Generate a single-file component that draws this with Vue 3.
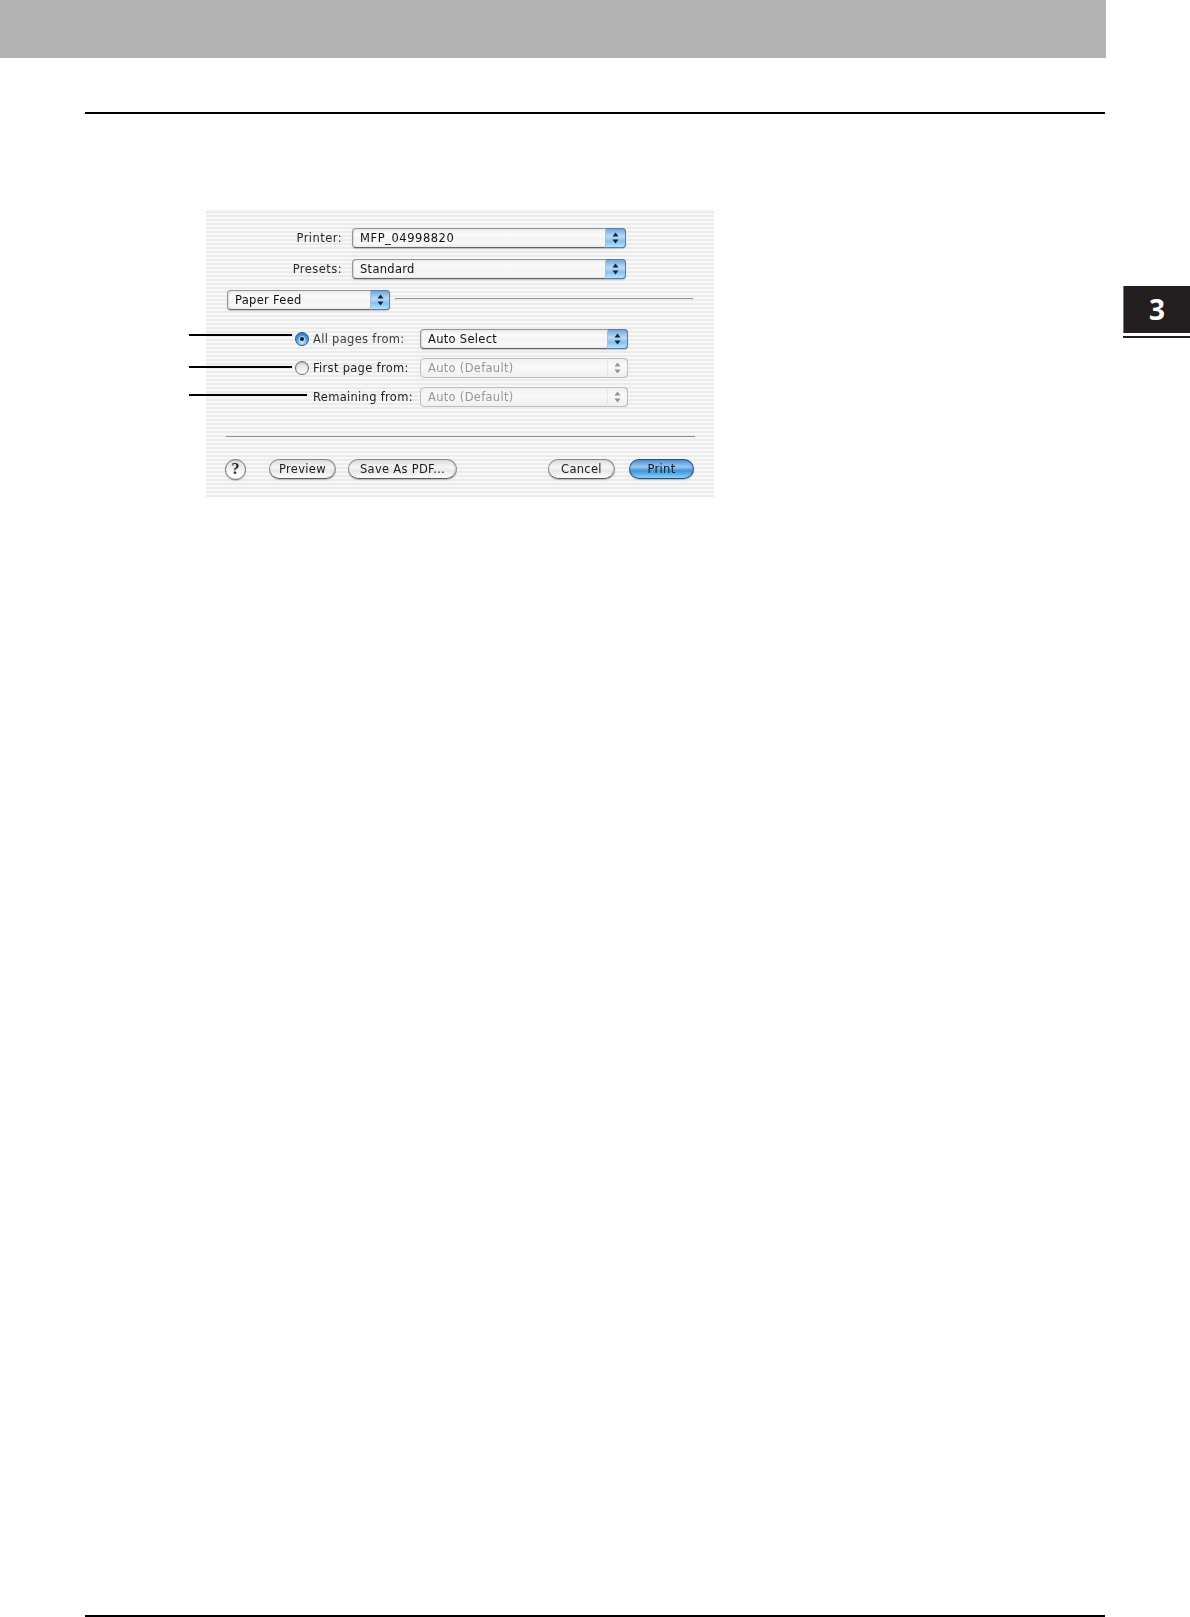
<script setup>
const topSelects = [
  { label: 'Printer:', value: 'MFP_04998820', digits: true },
  { label: 'Presets:', value: 'Standard', digits: false },
]
const sourceRows = [
  { label: 'All pages from:', value: 'Auto Select', radio: 'on', disabled: false, leader: 'first' },
  { label: 'First page from:', value: 'Auto (Default)', radio: 'off', disabled: true, leader: 'second' },
  { label: 'Remaining from:', value: 'Auto (Default)', radio: null, disabled: true, leader: 'third' },
]
</script>

<template>
  <div class="page">
    <header class="band"></header>
    <div class="rule top-rule"></div>

    <section class="dialog">
      <div v-for="row in topSelects" :key="row.label" class="row top-row">
        <span class="top-label">{{ row.label }}</span>
        <div class="select wide">
          <span class="value" :class="{ digits: row.digits }">{{ row.value }}</span>
          <span class="stepper">
            <svg width="7" height="12" viewBox="0 0 7 12"><path d="M3.5 0.5 6.5 4.5H0.5Z M3.5 11.5 0.5 7.5H6.5Z" /></svg>
          </span>
        </div>
      </div>

      <div class="row feed-row">
        <div class="select feed">
          <span class="value">Paper Feed</span>
          <span class="stepper">
            <svg width="7" height="12" viewBox="0 0 7 12"><path d="M3.5 0.5 6.5 4.5H0.5Z M3.5 11.5 0.5 7.5H6.5Z" /></svg>
          </span>
        </div>
        <div class="feed-line"></div>
      </div>

      <div class="sources">
        <div v-for="row in sourceRows" :key="row.label" class="row source-row">
          <span class="leader" :class="row.leader"></span>
          <span class="radio-slot">
            <span v-if="row.radio" class="radio" :class="row.radio"></span>
          </span>
          <span class="source-label" :class="{ dim: row.radio === 'on' }">{{ row.label }}</span>
          <div class="select source" :class="{ disabled: row.disabled }">
            <span class="value">{{ row.value }}</span>
            <span class="stepper">
              <svg width="7" height="12" viewBox="0 0 7 12"><path d="M3.5 0.5 6.5 4.5H0.5Z M3.5 11.5 0.5 7.5H6.5Z" /></svg>
            </span>
          </div>
        </div>
      </div>

      <div class="separator"></div>

      <div class="row footer">
        <span class="help">?</span>
        <button class="btn preview">Preview</button>
        <button class="btn save">Save As PDF...</button>
        <button class="btn cancel">Cancel</button>
        <button class="btn print">Print</button>
      </div>
    </section>

    <div class="rule bottom-rule"></div>

    <aside class="tab">
      <span class="tab-box">3</span>
      <span class="tab-line"></span>
    </aside>
  </div>
</template>

<style>
html, body { margin: 0; background: #fff; }
</style>

<style scoped>
.page {
  position: relative;
  width: 1190px;
  height: 1617px;
  display: flex;
  flex-direction: column;
  overflow: hidden;
  background: #fff;
  font-family: "DejaVu Sans", sans-serif;
}
.band { width: 1106px; height: 58px; background: #b3b3b3; flex: none; }
.rule { height: 2px; width: 1020px; margin-left: 85px; background: #000; flex: none; }
.top-rule { margin-top: 54px; }
.bottom-rule { margin-top: auto; }

.dialog {
  box-sizing: border-box;
  width: 508px;
  height: 288px;
  margin: 95px 0 0 206px;
  padding: 19px 20px 0 0;
  display: flex;
  flex-direction: column;
  flex: none;
  color: #1c1c1c;
  font-size: 11.5px;
  letter-spacing: 0.3px;
  background: repeating-linear-gradient(180deg, #f8f8f8 0 2px, #ebebeb 2px 4px);
}
.row { display: flex; align-items: center; height: 20px; flex: none; }
.top-row { margin-bottom: 11px; }
.top-label {
  width: 136px;
  margin-right: 10px;
  text-align: right;
  color: #2a2a2a;
  letter-spacing: 0.45px;
  filter: blur(0.3px);
}

.select {
  box-sizing: border-box;
  position: relative;
  height: 20px;
  display: flex;
  align-items: center;
  justify-content: space-between;
  border: 1px solid #91959e;
  border-bottom-color: #62656c;
  border-radius: 4px;
  background: linear-gradient(180deg, #ececec 0%, #fbfbfb 30%, #f4f4f4 55%, #f8f8f8 80%, #eeeeee 100%);
  box-shadow: 0 1px 1px rgba(110, 110, 110, 0.35), inset 1px 0 1px rgba(120, 120, 120, 0.2);
  filter: blur(0.35px);
  flex: none;
}
.value { padding-left: 7px; color: #111; white-space: nowrap; }
.value.digits { letter-spacing: 0.55px; }
.stepper {
  box-sizing: border-box;
  align-self: stretch;
  display: flex;
  align-items: center;
  justify-content: center;
  margin: -1px -1px -1px 0;
  border: 1px solid #5a7eaa;
  border-left: 1px solid #a9c1d8;
  border-radius: 0 4px 4px 0;
  background: linear-gradient(180deg, #72a8dd 0%, #bbdaf4 42%, #86c2ee 68%, #b4e4fa 100%);
}
.stepper svg { fill: #10233f; }
.wide { width: 274px; }
.wide .stepper { width: 21px; }
.feed { width: 163px; }
.feed .stepper { width: 20px; }
.feed-row { margin: 0 0 0 21px; }
.feed-line { width: 298px; height: 1px; margin: 0 0 4px 5px; background: #8d9096; }

.sources { display: flex; flex-direction: column; gap: 9px; margin-top: 19px; }
.source-row { position: relative; padding-left: 89px; }
.leader { position: absolute; left: -17px; height: 2px; background: #000; }
.leader.first { top: 5px; width: 103px; }
.leader.second { top: 8px; width: 103px; }
.leader.third { top: 7px; width: 118px; }
.radio-slot { width: 14px; height: 14px; margin-right: 4px; flex: none; }
.radio {
  box-sizing: border-box;
  display: block;
  position: relative;
  width: 14px;
  height: 14px;
  border-radius: 50%;
  filter: blur(0.25px);
}
.radio.off {
  border: 1px solid #6a6e76;
  background: linear-gradient(180deg, #dcdcdc, #ffffff);
  box-shadow: inset 0 1px 1px rgba(90, 90, 90, 0.35);
}
.radio.on {
  border: 1px solid #23558f;
  background: radial-gradient(circle at 50% 85%, #bde8fb 0%, #4f9be0 55%, #2768b8 100%);
}
.radio.on::after {
  content: "";
  position: absolute;
  left: 4px;
  top: 4px;
  width: 4px;
  height: 4px;
  border-radius: 50%;
  background: #0c1a2e;
  box-shadow: 0 0 1px 1px rgba(255, 255, 255, 0.55);
}
.source-label { width: 107px; flex: none; white-space: nowrap; color: #222; filter: blur(0.3px); }
.source-label.dim { color: #3c3c3c; }
.source { width: 208px; }
.source .stepper { width: 21px; }
.select.disabled {
  border-color: #bcbec3;
  background: linear-gradient(180deg, #f0f0f0, #f9f9f9 40%, #efefef);
  box-shadow: none;
}
.select.disabled .value { color: #94979e; }
.select.disabled .stepper {
  background: none;
  border-color: #bcbec3;
  border-left-color: #e6e6e6;
}
.select.disabled .stepper svg { fill: #8e9198; }

.separator { width: 469px; height: 1px; margin: 29px 0 0 20px; background: #8d9096; flex: none; }

.footer { margin: 22px 0 0 19px; }
.help {
  box-sizing: border-box;
  width: 21px;
  height: 21px;
  margin-right: 23px;
  display: flex;
  align-items: center;
  justify-content: center;
  border: 1px solid #6a6d74;
  border-radius: 50%;
  font-family: "Liberation Serif", serif;
  font-size: 16px;
  font-weight: 700;
  letter-spacing: 0;
  color: #222;
  background: linear-gradient(180deg, #d8d8d8, #ffffff 70%);
  box-shadow: 0 1px 1px rgba(110, 110, 110, 0.4);
  filter: blur(0.3px);
  flex: none;
}
.btn {
  box-sizing: border-box;
  height: 20px;
  padding: 0;
  border: 1px solid #858991;
  border-bottom-color: #5a5d64;
  border-radius: 10px;
  font: inherit;
  letter-spacing: inherit;
  color: #1a1a1a;
  background: linear-gradient(180deg, #dedede 0%, #f6f6f6 40%, #e8e8e8 62%, #ffffff 100%);
  box-shadow: 0 1px 1px rgba(110, 110, 110, 0.4), inset -1px 0 1px rgba(120, 120, 120, 0.3);
  filter: blur(0.35px);
  flex: none;
}
.preview { width: 67px; }
.save { width: 109px; margin-left: 12px; }
.cancel { width: 67px; margin-left: auto; }
.print {
  width: 65px;
  margin-left: 14px;
  border-color: #1f4f97;
  border-bottom-color: #24507f;
  background: linear-gradient(180deg, #4f8fd0 0%, #9cc8ee 38%, #3f93dc 60%, #86d4f9 100%);
}

.tab { position: absolute; right: 0; top: 286px; width: 67px; display: flex; flex-direction: column; }
.tab-box {
  box-sizing: border-box;
  height: 47px;
  padding-bottom: 1px;
  display: flex;
  align-items: center;
  justify-content: center;
  border-left: 1px solid #777;
  background: #231f20;
  color: #fff;
  font-family: "Open Sans", sans-serif;
  font-weight: 700;
  font-size: 28px;
}
.tab-line { height: 2px; margin-top: 3px; background: #231f20; }
</style>
